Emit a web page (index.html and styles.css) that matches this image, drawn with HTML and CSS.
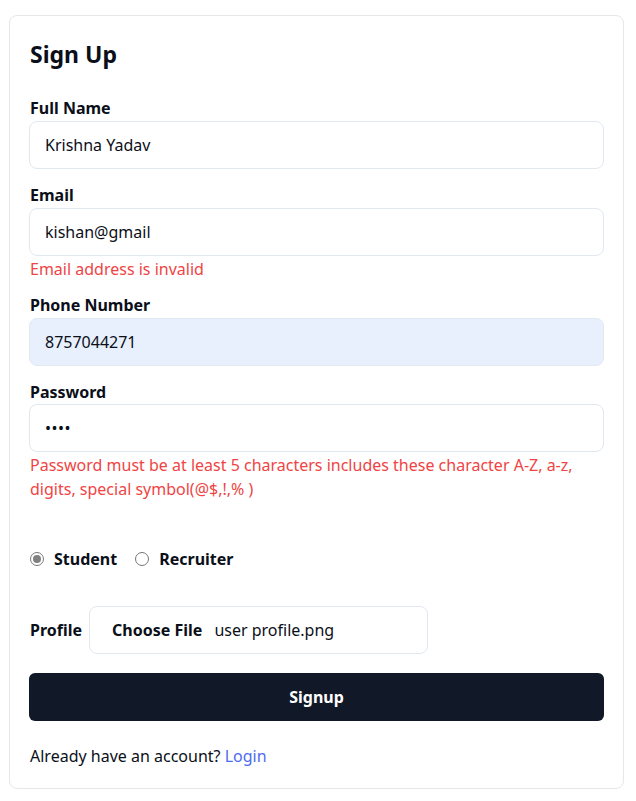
FILE: index.html
```html
<!DOCTYPE html>
<html lang="en">
<head>
<meta charset="utf-8">
<title>Sign Up</title>
<link rel="stylesheet" href="styles.css">
</head>
<body>
<form class="card">
  <h1 class="title">Sign Up</h1>

  <div class="field">
    <label class="label">Full Name</label>
    <div class="input">Krishna Yadav</div>
  </div>

  <div class="field">
    <label class="label">Email</label>
    <div class="input">kishan@gmail</div>
    <p class="error">Email address is invalid</p>
  </div>

  <div class="field">
    <label class="label">Phone Number</label>
    <div class="input input-filled">8757044271</div>
  </div>

  <div class="field">
    <label class="label label-tight">Password</label>
    <div class="input input-pass">••••</div>
    <p class="error error-pass">Password must be at least 5 characters includes these character A-Z, a-z, digits, special symbol(@$,!,% )</p>
  </div>

  <div class="radios">
    <label class="radio"><span class="dot dot-on"></span>Student</label>
    <label class="radio"><span class="dot"></span>Recruiter</label>
  </div>

  <div class="profile">
    <span class="label-inline">Profile</span>
    <div class="file">
      <span class="file-btn">Choose File</span>
      <span class="file-name">user profile.png</span>
    </div>
  </div>

  <button type="button" class="submit">Signup</button>

  <p class="footer">Already have an account? <a class="link" href="#">Login</a></p>
</form>
</body>
</html>
```
FILE: styles.css
```css
* { box-sizing: border-box; }
body {
  margin: 0;
  padding: 15px 12px 0 9px;
  font-family: "Noto Sans", "Open Sans", sans-serif;
  color: #0b0f19;
  background: #fff;
}
.card {
  width: 615px;
  border: 1px solid #e5e7eb;
  border-radius: 8px;
  padding: 20px 19px 20px 19px;
}
.title {
  margin: 0 0 24px 1px;
  font-size: 23px;
  line-height: 36px;
  font-weight: 700;
}
.field { margin-bottom: 14px; }
.label {
  display: block;
  font-size: 16px;
  line-height: 24px;
  font-weight: 700;
  padding-left: 1px;
  margin-bottom: 1px;
}
.label-tight { margin-bottom: 0; }
.input {
  height: 48px;
  border: 1px solid #e2e8f0;
  border-radius: 8px;
  padding: 0 15px;
  display: flex;
  align-items: center;
  font-size: 16px;
}
.input-filled { background: #e8f0fe; }
.input-pass { font-size: 16px; letter-spacing: 0.5px; }
.error {
  margin: 1px 0 -2px 1px;
  color: #ef4444;
  font-size: 16px;
  line-height: 24px;
}
.error-pass { margin-top: 1px; }
.radios {
  display: flex;
  align-items: center;
  gap: 18px;
  margin: 48px 0 0 1px;
  height: 24px;
}
.radio {
  display: flex;
  align-items: center;
  gap: 10px;
  font-weight: 700;
  font-size: 16px;
}
.dot {
  width: 14px;
  height: 14px;
  border: 1px solid #767676;
  border-radius: 50%;
  background: #fff;
  display: inline-block;
  position: relative;
}
.dot-on {
  border-color: #7a7a7a;
}
.dot-on::after {
  content: "";
  position: absolute;
  left: 2px;
  top: 2px;
  width: 8px;
  height: 8px;
  border-radius: 50%;
  background: #808080;
}
.profile {
  display: flex;
  align-items: center;
  gap: 7px;
  margin: 35px 0 19px 1px;
}
.label-inline { font-weight: 700; font-size: 16px; }
.file {
  width: 339px;
  height: 48px;
  border: 1px solid #e2e8f0;
  border-radius: 8px;
  display: flex;
  align-items: center;
  padding-left: 22px;
  font-size: 16px;
}
.file-btn { font-weight: 700; margin-right: 12px; }
.submit {
  display: block;
  width: 100%;
  height: 48px;
  border: 0;
  border-radius: 6px;
  background: #111827;
  color: #fff;
  font-family: inherit;
  font-size: 16px;
  font-weight: 700;
}
.footer {
  margin: 23px 0 0 1px;
  font-size: 16px;
  line-height: 24px;
}
.link { color: #4e6cf0; text-decoration: none; }
```
